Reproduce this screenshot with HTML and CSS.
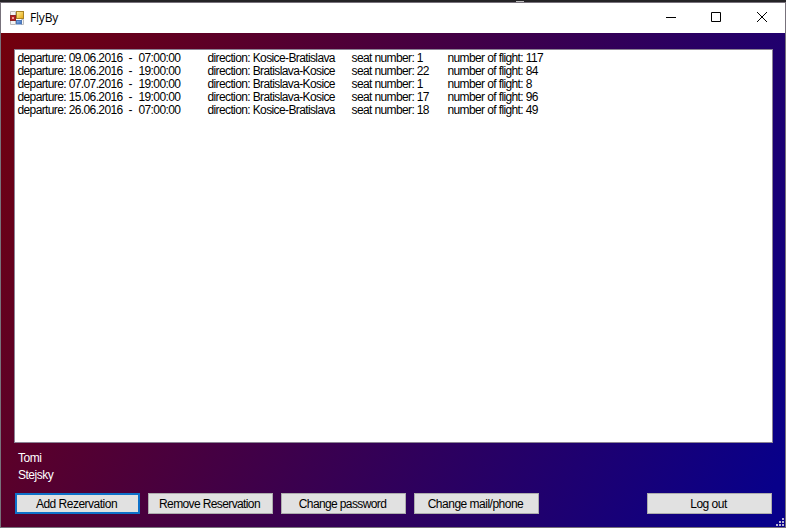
FILE: index.html
```
<!DOCTYPE html>
<html lang="en">
<head>
<meta charset="utf-8">
<title>FlyBy</title>
<link rel="stylesheet" href="styles.css">
</head>
<body>
<div class="backdrop"><i></i></div>
<div class="window">
  <header class="titlebar">
    <svg class="app-icon" width="14" height="14" viewBox="0 0 14 14">
      <defs>
        <linearGradient id="y" x2="1" y2="1"><stop stop-color="#fff3a0"/><stop offset="1" stop-color="#e5a50c"/></linearGradient>
        <linearGradient id="b" x2="1" y2="1"><stop stop-color="#8fbaf0"/><stop offset="1" stop-color="#2d62b8"/></linearGradient>
      </defs>
      <path d="M.5.5h5v4h-5zM.5 9.500h5v4h-5zM11.500 8.500h2v5h-2z" fill="#f4f4f4" stroke="#bcbcbc"/>
      <rect x="6.500" y="9.500" width="5" height="3.500" fill="url(#b)" stroke="#4d77b5"/>
      <rect x=".5" y="4.500" width="5" height="5" fill="#b52020" stroke="#8d2424"/>
      <rect x="2" y="6" width="2" height="2" fill="#ef9b95"/>
      <rect x="6.500" y=".5" width="7" height="7" fill="url(#y)" stroke="#a98224"/>
    </svg>
    <h1>FlyBy</h1>
    <svg class="controls" width="103" height="12" viewBox="0 0 103 12" fill="none" stroke="#000">
      <path d="M0 5.500h10M45.500 .5h9v9h-9z"/><path d="M91 0l10 10M101 0L91 10"/>
    </svg>
  </header>
  <main class="client">
    <ul class="list">
      <li><span>departure: 09.06.2016</span><span>-</span><span>07:00:00</span><span>direction: Kosice-Bratislava</span><span>seat number: 1</span><span>number of flight: 117</span></li>
      <li><span>departure: 18.06.2016</span><span>-</span><span>19:00:00</span><span>direction: Bratislava-Kosice</span><span>seat number: 22</span><span>number of flight: 84</span></li>
      <li><span>departure: 07.07.2016</span><span>-</span><span>19:00:00</span><span>direction: Bratislava-Kosice</span><span>seat number: 1</span><span>number of flight: 8</span></li>
      <li><span>departure: 15.06.2016</span><span>-</span><span>19:00:00</span><span>direction: Bratislava-Kosice</span><span>seat number: 17</span><span>number of flight: 96</span></li>
      <li><span>departure: 26.06.2016</span><span>-</span><span>07:00:00</span><span>direction: Kosice-Bratislava</span><span>seat number: 18</span><span>number of flight: 49</span></li>
    </ul>
    <div class="user"><p>Tomi</p><p>Stejsky</p></div>
    <div class="actions">
      <button class="focused">Add Rezervation</button>
      <button>Remove Reservation</button>
      <button>Change password</button>
      <button>Change mail/phone</button>
      <button class="logout">Log out</button>
    </div>
    <svg class="grip" width="8" height="8" viewBox="0 0 8 8" fill="#b9b5d3"><path d="M6 0h2v2H6zM3 3h2v2H3zM6 3h2v2H6zM0 6h2v2H0zM3 6h2v2H3zM6 6h2v2H6z"/></svg>
  </main>
</div>
</body>
</html>
```
FILE: styles.css
```
* { box-sizing: border-box; margin: 0; padding: 0; }
body {
  width: 786px;
  height: 528px;
  overflow: hidden;
  font: 12px/13px "Liberation Sans", sans-serif;
  letter-spacing: -0.62px;
  color: #000;
}
.backdrop { height: 2px; background: #242326; }
.backdrop i { display: block; width: 8px; height: 2px; margin-left: 516px; border-bottom: 1px solid #bbb; }
.window {
  height: 526px;
  border: 1px solid #77717b;
  display: flex;
  flex-direction: column;
}
.titlebar {
  height: 30px;
  background: #fff;
  display: flex;
  align-items: center;
  padding: 0 16px 0 9px;
}
.titlebar h1 { font: 12px/16px "Open Sans", sans-serif; letter-spacing: -0.2px; margin-left: 6px; }
.controls { margin-left: auto; }
.client {
  position: relative;
  flex: 1;
  padding: 16px 12px 13px 13px;
  background: linear-gradient(118deg, #73000c, #08008a 97%);
  display: flex;
  flex-direction: column;
}
.list {
  height: 394px;
  background: #fff;
  border: 1px solid #8b8394;
  list-style: none;
  padding: 2px;
}
.list li {
  display: grid;
  grid-template-columns: 111px 10px 69px 144px 96px 120px;
  height: 13px;
  padding-left: 0.5px;
  white-space: nowrap;
}
.user { color: #fff; line-height: 17px; padding: 7px 4px 0; height: 50px; letter-spacing: -0.5px; }
.actions { display: flex; gap: 8px; padding: 0 1px; }
button {
  width: 125px;
  height: 21px;
  border: 1px solid #adadad;
  background: #e1e1e1;
  font: inherit;
  letter-spacing: -0.62px;
  padding: 1px 2px 0 0;
  color: #000;
}
button:nth-child(1), button:nth-child(4), .logout { letter-spacing: -0.5px; }
.focused { border: 2px solid #0d71c9; }
.logout { margin-left: auto; }
.grip { position: absolute; right: 1px; bottom: 1px; }
```
